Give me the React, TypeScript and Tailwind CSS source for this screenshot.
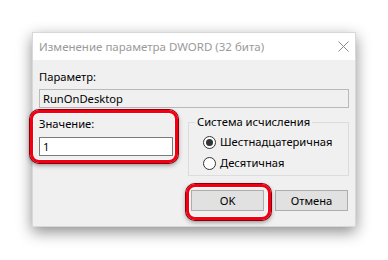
export default function App() {
  return (
    <div className="w-[388px] h-[260px] bg-white overflow-hidden pt-[32px] pl-[32px] font-['Noto_Sans',sans-serif] text-[11.2px] text-black">
      {/* dialog window */}
      <div className="relative w-[324px] h-[195px] bg-[#f0f0f0] border border-[#d8d8d8] shadow-[0_5px_14px_rgba(0,0,0,0.45)]">
        <div className="h-[27px] bg-white flex items-center justify-between pl-[6px] pr-[6px]">
          <span className="text-[#9a9a9a] text-[11.5px] leading-none">Изменение параметра DWORD (32 бита)</span>
          <svg width="11" height="11" viewBox="0 0 11 11">
            <path d="M0.5 0.5 L10.5 10.5 M10.5 0.5 L0.5 10.5" stroke="#8a8a8a" strokeWidth="1" />
          </svg>
        </div>

        <div className="px-[6px] pt-[9px]">
          <div className="leading-[16px]">Параметр:</div>
          <div className="mt-[4px] h-[19px] border border-[#b9b9b9] bg-[#f0f0f0] flex items-center px-[3px] leading-none">
            RunOnDesktop
          </div>

          <div className="flex mt-[8px] gap-[15px]">
            <div className="w-[134px]">
              <div className="leading-[16px]">Значение:</div>
              <div className="mt-[5px] h-[19px] border border-[#7a7a7a] bg-white flex items-center px-[3px] leading-none">
                1
              </div>
            </div>
            <fieldset className="w-[161px] h-[60px] border border-[#dcdcdc] pl-[6px] pt-[4px]">
              <legend className="px-[2px] leading-[12px]">Система исчисления</legend>
              <div className="pl-[8px]">
                <label className="flex items-center gap-[4px] h-[20px]">
                  <span className="w-[13px] h-[13px] rounded-full border border-[#333] bg-white flex items-center justify-center">
                    <span className="w-[7px] h-[7px] rounded-full bg-[#333]" />
                  </span>
                  Шестнадцатеричная
                </label>
                <label className="flex items-center gap-[4px] h-[20px] mt-[1px]">
                  <span className="w-[13px] h-[13px] rounded-full border border-[#333] bg-white" />
                  Десятичная
                </label>
              </div>
            </fieldset>
          </div>

          <div className="flex justify-end gap-[11px] mt-[14px] pr-[1px]">
            <button className="w-[73px] h-[21px] bg-[#e1e1e1] border border-[#adadad] leading-none">OK</button>
            <button className="w-[73px] h-[21px] bg-[#e1e1e1] border border-[#adadad] leading-none">Отмена</button>
          </div>
        </div>

        {/* red highlights */}
        <div className="absolute left-[-3px] top-[77px] w-[148px] h-[53px] rounded-[9px] border-[3px] border-[#f20012] shadow-[0_0_0_1px_#8a0010,inset_0_0_0_1px_#ffffff,0_2px_5px_rgba(0,0,0,0.45)]" />
        <div className="absolute left-[153px] top-[151px] w-[85px] h-[36px] rounded-[9px] border-[3px] border-[#f20012] shadow-[0_0_0_1px_#8a0010,inset_0_0_0_1px_#ffffff,0_2px_5px_rgba(0,0,0,0.45)]" />
      </div>
    </div>
  );
}
